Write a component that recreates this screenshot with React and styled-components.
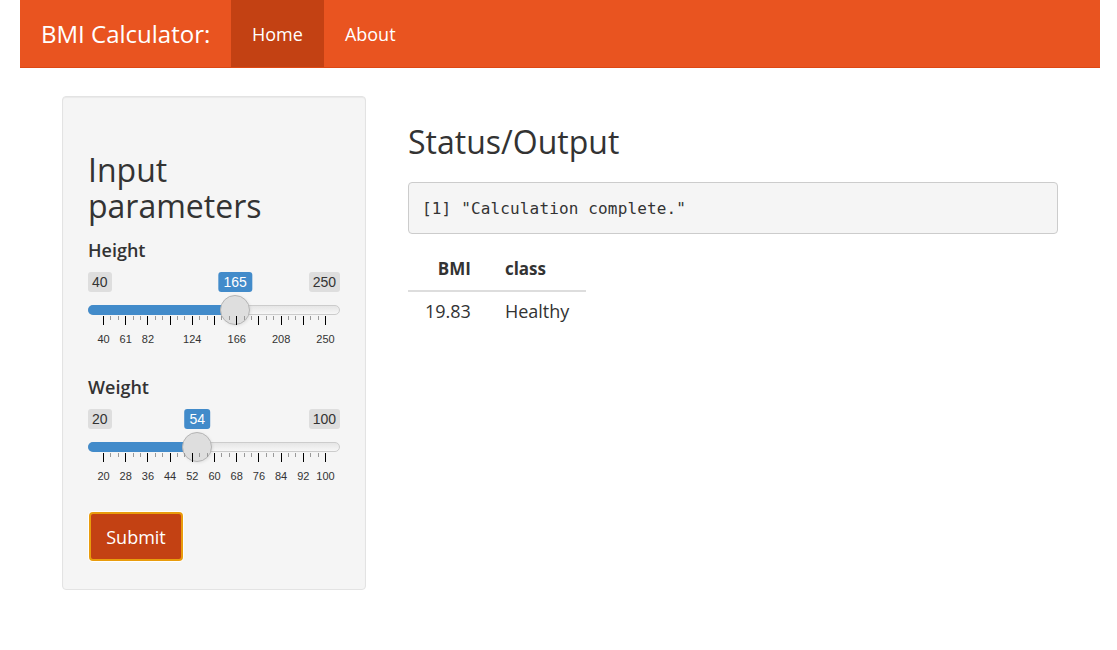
import React from "react";
import styled, { createGlobalStyle } from "styled-components";

const GlobalStyle = createGlobalStyle`
  body {
    margin: 0;
    background: #fff;
    font-family: "Open Sans", "Noto Sans", sans-serif;
    color: #333;
  }
`;

const S = {
  Page: styled.div`
    padding: 0 17px 0 20px;
  `,
  Navbar: styled.nav`
    display: flex;
    align-items: stretch;
    height: 68px;
    box-sizing: border-box;
    background: #e95420;
    border-bottom: 1px solid #dd4814;
  `,
  Brand: styled.div`
    width: 211px;
    box-sizing: border-box;
    padding-left: 21px;
    display: flex;
    align-items: center;
    color: #fff;
    font-size: 24px;
  `,
  NavItem: styled.div`
    display: flex;
    align-items: center;
    padding: 0 21px;
    font-size: 18px;
    font-weight: 500;
    color: #fff;
    background: ${(p) => (p.$active ? "#c34113" : "transparent")};
  `,
  Row: styled.div`
    display: flex;
    align-items: flex-start;
    gap: 42px;
    padding: 28px 42px 0;
  `,
  Well: styled.div`
    width: 304px;
    flex-shrink: 0;
    box-sizing: border-box;
    background: #f5f5f5;
    border: 1px solid #e3e3e3;
    border-radius: 4px;
    box-shadow: inset 0 1px 1px rgba(0, 0, 0, 0.05);
    padding: 0 25px 28px;
  `,
  SideTitle: styled.h2`
    margin: 55px 0 0;
    font-size: 32px;
    line-height: 36px;
    font-weight: 400;
    color: #333;
  `,
  Group: styled.div`
    margin: ${(p) => (p.$first ? "16px" : "21px")} 0 0;
  `,
  Label: styled.div`
    font-size: 18px;
    line-height: 20px;
    height: 20px;
    font-weight: 600;
    color: #333;
  `,
  Submit: styled.button`
    display: block;
    margin: 19px 0 0 1px;
    width: 94px;
    height: 49px;
    box-sizing: border-box;
    background: #c34113;
    border: 2px solid #e99c0c;
    border-radius: 4px;
    box-shadow: 0 0 0 1px #fff;
    color: #fff;
    font-family: "Open Sans", "Noto Sans", sans-serif;
    font-size: 18px;
    font-weight: 500;
    padding: 0;
  `,
  Main: styled.div`
    flex: 1;
    min-width: 0;
  `,
  MainTitle: styled.h2`
    margin: 28px 0 0;
    font-size: 32px;
    line-height: 36px;
    font-weight: 400;
    color: #333;
  `,
  Pre: styled.pre`
    margin: 22px 0 0;
    height: 52px;
    box-sizing: border-box;
    display: flex;
    align-items: center;
    padding: 0 13px;
    background: #f5f5f5;
    border: 1px solid #ccc;
    border-radius: 4px;
    font-family: "DejaVu Sans Mono", "Liberation Mono", monospace;
    font-size: 16px;
    letter-spacing: 0.15px;
    color: #333;
  `,
  Table: styled.table`
    margin-top: 15px;
    border-collapse: collapse;
  `,
  Th: styled.th`
    padding: 8px 17px 9px;
    font-size: 17px;
    line-height: 24px;
    font-weight: 700;
    color: #333;
    text-align: ${(p) => (p.$right ? "right" : "left")};
    border-bottom: 2px solid #ddd;
  `,
  Td: styled.td`
    padding: 7px 17px 8px;
    font-size: 18px;
    line-height: 24px;
    color: #333;
    text-align: ${(p) => (p.$right ? "right" : "left")};
  `,
};

const SL = {
  Wrap: styled.div`
    height: 96px;
    box-sizing: border-box;
    padding-top: 12px;
    font-family: "Liberation Sans", Arial, sans-serif;
  `,
  BadgeRow: styled.div`
    position: relative;
    height: 20px;
    display: flex;
    justify-content: space-between;
  `,
  Badge: styled.span`
    height: 20px;
    line-height: 20px;
    padding: 0 4px;
    border-radius: 3px;
    background: #dedede;
    color: #333;
    font-size: 14px;
  `,
  Value: styled.span`
    position: absolute;
    top: 0;
    transform: translateX(-50%);
    height: 20px;
    line-height: 20px;
    padding: 0 5px;
    border-radius: 3px;
    background: #428bca;
    color: #fff;
    font-size: 14px;
  `,
  Track: styled.div`
    position: relative;
    margin-top: 13px;
    height: 10px;
    box-sizing: border-box;
    border: 1px solid #ccc;
    border-radius: 16px;
    background: linear-gradient(to bottom, #ddd -50%, #fff 150%);
  `,
  Bar: styled.div`
    position: absolute;
    left: -1px;
    top: -1px;
    height: 10px;
    background: #428bca;
    border-radius: 16px 0 0 16px;
  `,
  Handle: styled.div`
    position: absolute;
    top: -11px;
    width: 30px;
    height: 30px;
    box-sizing: border-box;
    border-radius: 50%;
    background: #dedede;
    border: 1px solid #b5b5b5;
    box-shadow: 1px 1px 3px rgba(0, 0, 0, 0.08);
  `,
  Grid: styled.div`
    position: relative;
    margin-top: 1px;
    height: 40px;
  `,
  Tick: styled.span`
    position: absolute;
    top: 0;
    width: 1px;
    height: ${(p) => (p.$major ? "9px" : "4px")};
    background: ${(p) => (p.$major ? "#000" : "#999")};
  `,
  TickText: styled.span`
    position: absolute;
    top: 17px;
    transform: translateX(-50%);
    font-size: 11px;
    line-height: 13px;
    color: #333;
    white-space: nowrap;
  `,
};

const GRID = 222;
const PAD = 15;

const Slider = ({ min, max, value, step, hidden = [] }) => {
  const pos = (v) => PAD + ((v - min) / (max - min)) * GRID;
  const majors = [];
  for (let i = 0; i <= 10; i++) majors.push(min + i * step);
  const minors = [];
  for (let i = 0; i < 10; i++) {
    const x = pos(majors[i]);
    const d = GRID / 10 / 3;
    minors.push(x + d, x + 2 * d);
  }
  const center = pos(value);

  return (
    <SL.Wrap>
      <SL.BadgeRow>
        <SL.Badge>{min}</SL.Badge>
        <SL.Badge>{max}</SL.Badge>
        <SL.Value style={{ left: center }}>{value}</SL.Value>
      </SL.BadgeRow>
      <SL.Track>
        <SL.Bar style={{ width: center + 1 }} />
        <SL.Handle style={{ left: center - PAD - 1 }} />
      </SL.Track>
      <SL.Grid>
        {minors.map((x, i) => (
          <SL.Tick key={"m" + i} style={{ left: Math.round(x) }} />
        ))}
        {majors.map((v) => (
          <SL.Tick key={"M" + v} $major style={{ left: Math.round(pos(v)) }} />
        ))}
        {majors
          .filter((v) => !hidden.includes(v))
          .map((v) => (
            <SL.TickText key={"t" + v} style={{ left: pos(v) + 0.5 }}>
              {v}
            </SL.TickText>
          ))}
      </SL.Grid>
    </SL.Wrap>
  );
};

const App = () => {
  return (
    <>
      <GlobalStyle />
      <S.Page>
        <S.Navbar>
          <S.Brand>BMI Calculator:</S.Brand>
          <S.NavItem $active>Home</S.NavItem>
          <S.NavItem>About</S.NavItem>
        </S.Navbar>
        <S.Row>
          <S.Well>
            <S.SideTitle>
              Input
              <br />
              parameters
            </S.SideTitle>
            <S.Group $first>
              <S.Label>Height</S.Label>
              <Slider min={40} max={250} value={165} step={21} hidden={[103, 145, 187, 229]} />
            </S.Group>
            <S.Group>
              <S.Label>Weight</S.Label>
              <Slider min={20} max={100} value={54} step={8} />
            </S.Group>
            <S.Submit>Submit</S.Submit>
          </S.Well>
          <S.Main>
            <S.MainTitle>Status/Output</S.MainTitle>
            <S.Pre>[1] "Calculation complete."</S.Pre>
            <S.Table>
              <thead>
                <tr>
                  <S.Th $right>BMI</S.Th>
                  <S.Th>class</S.Th>
                </tr>
              </thead>
              <tbody>
                <tr>
                  <S.Td $right>19.83</S.Td>
                  <S.Td>Healthy</S.Td>
                </tr>
              </tbody>
            </S.Table>
          </S.Main>
        </S.Row>
      </S.Page>
    </>
  );
};

export default App;
